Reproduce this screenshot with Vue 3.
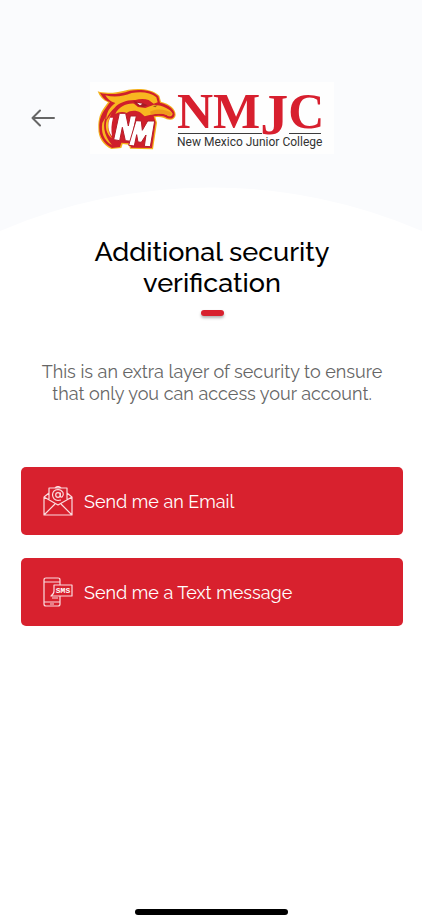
<template>
  <div class="screen">
    <header class="hero">
      <div class="top-bar">
        <button type="button" class="back" aria-label="Back" @click="goBack">
          <svg width="24" height="18" viewBox="0 0 24 18" aria-hidden="true">
            <path d="M9 1.5 1.5 9 9 16.5M1.5 9H23" />
          </svg>
        </button>

        <svg class="logo" viewBox="0 0 244 72" role="img" aria-label="New Mexico Junior College">
          <rect width="244" height="72" fill="#fefefe" />
          <!-- mascot -->
          <g transform="translate(-10 -7) scale(0.3333)">
            <path
              d="M53 49C78 57 112 53 145 44C175 40 215 40 238 62L243 80C268 86 287 101 287 119C286 132 274 137 260 133C253 127 238 124 226 127L231 143L219 223L150 221L147 209L128 207L124 219L94 222C70 211 54 188 55 158C54 132 61 113 72 98L84 82C69 76 59 65 53 49Z"
              fill="#f4b11c"
            />
            <path
              d="M60 53C88 61 122 57 150 47C180 43 215 44 235 64L240 83C266 89 284 103 284 119C282 131 271 133 261 129C252 122 235 120 221 124L227 142L216 219L153 218L150 205L124 203L120 216L96 219C73 207 58 186 58 160C57 133 65 116 77 100L90 81C76 77 66 66 60 53Z"
              fill="#cf1f2b"
            />
            <!-- crest -->
            <path
              d="M76 61C104 68 130 64 155 54C185 49 212 52 229 67L233 82L221 86L206 75C193 71 178 72 166 75C140 74 116 84 104 98C94 107 84 118 79 134C79 112 88 98 106 84C92 80 82 72 76 61Z"
              fill="#f8b720"
            />
            <!-- face and beak -->
            <path
              d="M106 117C116 96 140 84 162 86L174 96L196 99L222 89C250 91 272 103 278 116C275 127 266 125 260 120C248 114 232 115 218 118L194 124L182 113C168 104 150 106 140 114C128 108 115 111 106 117Z"
              fill="#f8b720"
            />
            <path d="M210 110C232 99 258 104 276 114C272 126 265 123 260 120C246 114 230 116 214 119Z" fill="#ef9a1c" />
            <path d="M81 119C66 143 70 180 96 210C71 198 62 170 67 144Z" fill="#f8b720" />
            <path d="M98 110C81 134 80 164 96 190C79 179 74 155 80 136Z" fill="#f8b720" />
            <path d="M90 128C82 147 84 168 96 184C93 164 94 147 99 128Z" fill="#fff" />
            <path d="M160 78L188 84L203 91L189 96L173 92Z" fill="#a51b25" />
            <path d="M171 83L187 86L180 91Z" fill="#fff" />
            <path d="M218 93L233 91L226 97Z" fill="#9e4e18" />
            <path
              d="M118 115L137 115L145 153L151 123L169 123L154 199L136 197L127 157L119 197L101 194Z"
              fill="#fff"
              stroke="#b51c28"
              stroke-width="3"
            />
            <path
              d="M168 137L184 138L187 166L203 138L224 138L211 215L193 214L198 180L184 202L174 201L170 179L163 213L146 211Z"
              fill="#fff"
              stroke="#b51c28"
              stroke-width="3"
            />
          </g>
          <text class="logo-name" x="87" y="46">NM<tspan class="logo-j" dy="6">J</tspan><tspan dy="-6">C</tspan></text>
          <path d="M88 51.5H172M199 51.5H231" stroke="#3c3c3c" stroke-width="1" />
          <text class="logo-sub" x="87" y="64">New Mexico Junior College</text>
        </svg>
      </div>

      <svg class="curve" viewBox="0 0 422 44" preserveAspectRatio="none" aria-hidden="true">
        <path d="M0 44A533 533 0 0 1 422 44Z" fill="#fff" />
      </svg>
    </header>

    <main class="content">
      <h1>Additional security verification</h1>
      <span class="dash"></span>
      <p>This is an extra layer of security to ensure that only you can access your account.</p>

      <div class="actions">
        <button type="button" class="action" @click="selectMethod('email')">
          <svg width="30" height="30" viewBox="0 0 30 30" aria-hidden="true">
            <path d="M1 11V29H29V11L15 19ZM1 29 12 18M29 29 18 18M1 11 6 7M29 11 24 7M6 14V2H24V14M12 2Q15-1 18 2" />
            <circle cx="15" cy="9" r="2.3" />
            <path d="M17.3 6.5V10Q17.5 11.5 19 11Q21 9 20 6.5Q18 3.5 15 3.5Q9.5 4 9.5 9Q10 14 15 14.5L18 14" />
          </svg>
          <span>Send me an Email</span>
        </button>

        <button type="button" class="action" @click="selectMethod('sms')">
          <svg width="30" height="30" viewBox="0 0 30 30" aria-hidden="true">
            <path d="M17 8V3Q17 1 15 1H3Q1 1 1 3V27Q1 29 3 29H15Q17 29 17 27V19M1 5H17M1 25H17M7 27H11" />
            <path d="M11 8H29V19H12L8 19Q11 17 11 14ZM9 21H15" />
            <text class="sms" x="20" y="16">SMS</text>
          </svg>
          <span>Send me a Text message</span>
        </button>
      </div>
    </main>

    <div class="home-indicator"></div>
  </div>
</template>

<script setup>
import { ref } from 'vue'

const emit = defineEmits(['back', 'select'])

const method = ref(null)

const goBack = () => {
  method.value = null
  emit('back')
}

const selectMethod = (value) => {
  method.value = value
  emit('select', value)
}
</script>

<style>
body {
  margin: 0;
  background: #fff;
}
</style>

<style scoped>
.screen {
  display: flex;
  flex-direction: column;
  min-height: 100vh;
  box-sizing: border-box;
  padding-bottom: 7px;
  background: #fff;
  font-family: Raleway, Lato, sans-serif;
}

.hero {
  background: #fafbfd;
  padding-top: 82px;
}

.top-bar {
  display: grid;
  grid-template-columns: 1fr auto 1fr;
  align-items: center;
  padding: 0 30px 33px 31px;
}

.back {
  display: flex;
  justify-self: start;
  padding: 0;
  border: none;
  background: none;
  cursor: pointer;
}

.back path {
  fill: none;
  stroke: #666;
  stroke-width: 2;
  stroke-linecap: round;
  stroke-linejoin: round;
}

.logo {
  display: block;
  width: 244px;
}

.logo-name {
  font: bold 50px "Liberation Serif", serif;
  fill: #d71f2e;
}

.logo-j {
  font-size: 56px;
}

.logo-sub {
  font: 400 12px Roboto, sans-serif;
  fill: #333;
}

.curve {
  display: block;
  width: 100%;
  height: 44px;
}

.content {
  display: flex;
  flex: 1;
  flex-direction: column;
  align-items: center;
  padding: 5px 19px 0 21px;
}

h1 {
  max-width: 280px;
  margin: 0;
  font-size: 27px;
  font-weight: 500;
  line-height: 31px;
  text-align: center;
  color: #000;
}

.dash {
  width: 23px;
  height: 6px;
  margin-top: 12px;
  border-radius: 3px;
  background: #d8212e;
  box-shadow: 0 2px 3px rgba(0, 0, 0, 0.3);
}

p {
  max-width: 360px;
  margin: 45px 0 0;
  font-size: 18px;
  font-weight: 400;
  line-height: 22px;
  text-align: center;
  color: #666;
}

.actions {
  display: flex;
  flex-direction: column;
  align-self: stretch;
  gap: 23px;
  margin-top: 62px;
}

.action {
  display: flex;
  align-items: center;
  gap: 11px;
  height: 68px;
  padding: 0 22px;
  border: none;
  border-radius: 5px;
  background: #d8212e;
  color: #fff;
  font-family: inherit;
  font-size: 18px;
  font-weight: 400;
  cursor: pointer;
}

.action path,
.action circle {
  fill: none;
  stroke: #fbdcdf;
  stroke-width: 1.2;
  stroke-linejoin: round;
}

.sms {
  font: bold 8px "Liberation Mono", monospace;
  fill: #fff;
  text-anchor: middle;
}

.home-indicator {
  align-self: center;
  width: 153px;
  height: 6px;
  border-radius: 3px;
  background: #000;
}
</style>
